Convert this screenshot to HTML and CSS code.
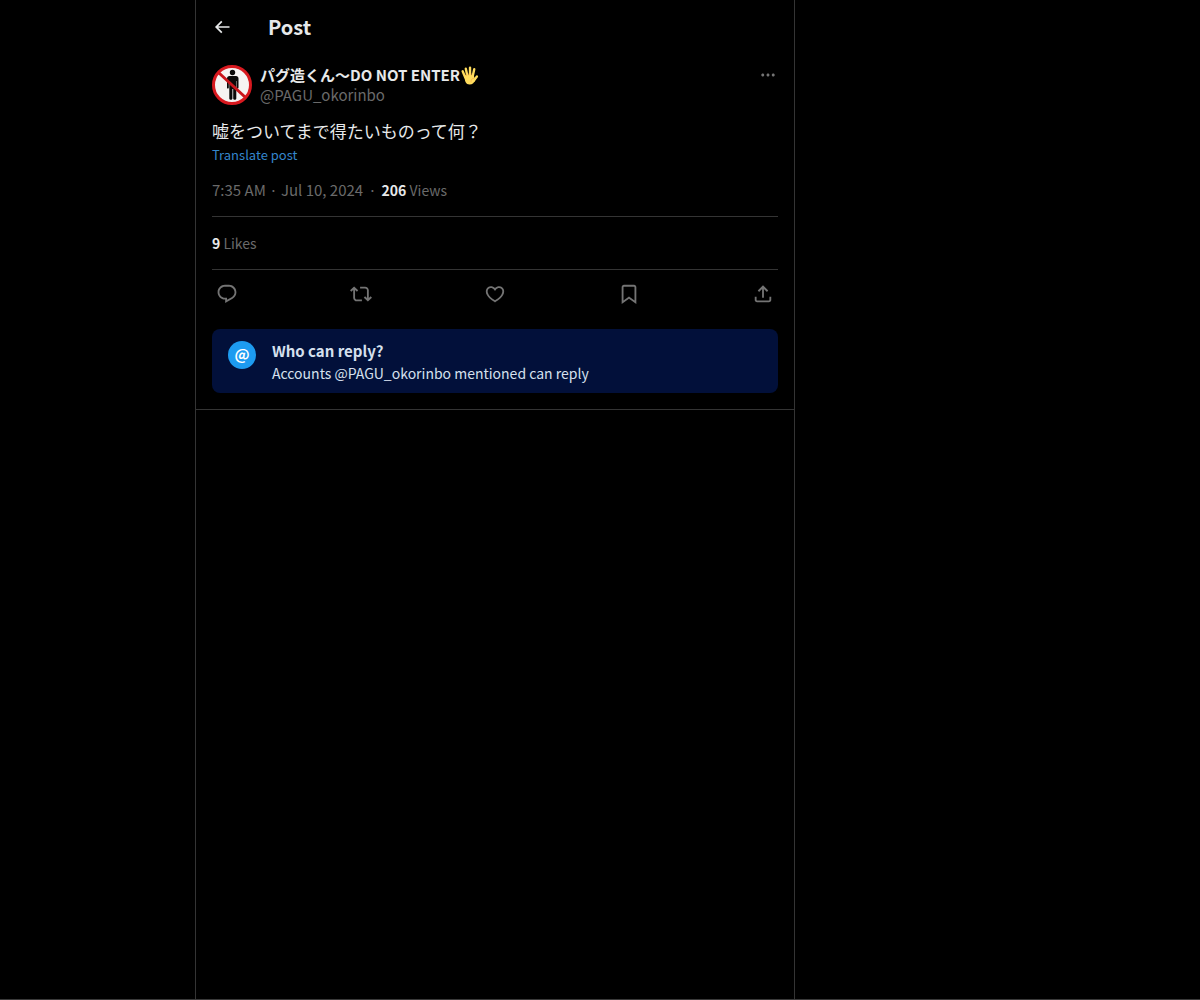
FILE: index.html
```html
<!DOCTYPE html>
<html lang="ja">
<head>
    <meta charset="UTF-8">
    <meta name="viewport" content="width=device-width, initial-scale=1.0">
    <title>Post</title>
    <link rel="stylesheet" href="styles.css">
</head>
<body>
    <main class="timeline">
        <header class="top-bar">
            <button type="button" class="icon-btn back" aria-label="Back">
                <svg viewBox="0 0 24 24"><path d="M7.414 13l5.043 5.04-1.414 1.42L3.586 12l7.457-7.46 1.414 1.42L7.414 11H21v2H7.414z"/></svg>
            </button>
            <h1>Post</h1>
        </header>

        <article class="post">
            <div class="author">
                <a href="#" class="avatar" aria-label="Profile">
                    <svg viewBox="0 0 40 40">
                        <circle cx="20" cy="20" r="19" fill="#f6f3f2"/>
                        <g fill="#0b0908">
                            <circle cx="20.500" cy="7.500" r="2.700"/>
                            <path d="M17.500 11h6.500c1.500 0 2.500 1 2.500 2.500v9c0 1.500-1.800 1.500-1.800 0V16h-.4v17.500c0 1.800-3.100 1.800-3.100 0V24h-.8v9.500c0 1.800-3.100 1.800-3.100 0V16h-.5v6.500c0 1.500-1.800 1.500-1.800 0v-9c0-1.500 1-2.500 2.500-2.500z"/>
                        </g>
                        <path d="M7 8l26 24" stroke="#c9151b" stroke-width="3"/>
                        <circle cx="20" cy="20" r="18.500" fill="none" stroke="#d8191f" stroke-width="3"/>
                    </svg>
                </a>
                <div class="names">
                    <a href="#" class="display-name">パグ造くん〜DO NOT ENTER<svg class="emoji" viewBox="0 0 36 36" role="img" aria-label="hand">
                        <g fill="none" stroke="#ffdc5d" stroke-width="4.500" stroke-linecap="round">
                            <path d="M10 22L5 10M14 19L11 5M19 19V3M24 20l3-14M26 28l6-8"/>
                        </g>
                        <path d="M8 18c4-2 14-2 18 0l3 8c-2 6-5 9-11 9-7 0-9-6-10-17z" fill="#ffdc5d"/>
                        <path d="M12.500 19l-1-4M16.500 18v-4M21.500 18v-4M27 23c-5 1-7 4-6 8" fill="none" stroke="#ef9645" stroke-width="1"/>
                    </svg></a>
                    <a href="#" class="handle">@PAGU_okorinbo</a>
                </div>
                <button type="button" class="icon-btn more" aria-label="More">
                    <svg viewBox="0 0 24 24"><path d="M3 12c0-1.100.9-2 2-2s2 .9 2 2-.9 2-2 2-2-.9-2-2zm9 2c1.100 0 2-.9 2-2s-.9-2-2-2-2 .9-2 2 .9 2 2 2zm7 0c1.100 0 2-.9 2-2s-.9-2-2-2-2 .9-2 2 .9 2 2 2z"/></svg>
                </button>
            </div>

            <p class="post-text">嘘をついてまで得たいものって何？</p>
            <button type="button" class="translate">Translate post</button>

            <div class="meta">
                <a href="#">7:35 AM · Jul 10, 2024</a>
                <span>·</span>
                <span class="views"><strong>206</strong> Views</span>
            </div>

            <div class="stats">
                <a href="#"><strong>9</strong> Likes</a>
            </div>

            <div class="actions">
                <button type="button" class="icon-btn" aria-label="Reply">
                    <svg viewBox="0 0 24 24"><path d="M1.751 10c0-4.42 3.584-8 8.005-8h4.366c4.490 0 8.129 3.640 8.129 8.130 0 2.960-1.607 5.680-4.196 7.110l-8.054 4.460v-3.690h-.067c-4.490.1-8.183-3.510-8.183-8.010zm8.005-6c-3.317 0-6.005 2.690-6.005 6 0 3.370 2.770 6.080 6.138 6.010l.351-.01h1.761v2.300l5.087-2.810c1.951-1.080 3.163-3.130 3.163-5.360 0-3.390-2.744-6.130-6.129-6.130H9.756z"/></svg>
                </button>
                <button type="button" class="icon-btn" aria-label="Repost">
                    <svg viewBox="0 0 24 24"><path d="M4.500 3.880l4.432 4.140-1.364 1.460L5.500 7.550V16c0 1.100.896 2 2 2H13v2H7.500c-2.209 0-4-1.790-4-4V7.550L1.432 9.480.068 8.020 4.500 3.880zM16.500 6H11V4h5.500c2.209 0 4 1.790 4 4v8.450l2.068-1.930 1.364 1.460-4.432 4.140-4.432-4.140 1.364-1.460 2.068 1.930V8c0-1.100-.896-2-2-2z"/></svg>
                </button>
                <button type="button" class="icon-btn" aria-label="Like">
                    <svg viewBox="0 0 24 24"><path d="M16.697 5.500c-1.222-.06-2.679.51-3.890 2.160l-.805 1.090-.806-1.090C9.984 6.010 8.526 5.440 7.304 5.500c-1.243.07-2.349.78-2.910 1.910-.552 1.120-.633 2.780.479 4.820 1.074 1.970 3.257 4.270 7.129 6.610 3.870-2.340 6.052-4.640 7.126-6.610 1.111-2.040 1.030-3.700.477-4.820-.561-1.130-1.666-1.840-2.908-1.910zm4.187 7.690c-1.351 2.480-4.001 5.120-8.379 7.670l-.503.3-.504-.3c-4.379-2.550-7.029-5.190-8.382-7.670-1.360-2.500-1.410-4.860-.514-6.670.887-1.790 2.647-2.910 4.601-3.010 1.651-.09 3.368.56 4.798 2.010 1.429-1.450 3.146-2.100 4.796-2.010 1.954.1 3.714 1.220 4.601 3.010.896 1.810.846 4.170-.514 6.670z"/></svg>
                </button>
                <button type="button" class="icon-btn" aria-label="Bookmark">
                    <svg viewBox="0 0 24 24"><path d="M4 4.500C4 3.120 5.119 2 6.500 2h11C18.881 2 20 3.120 20 4.500v18.440l-8-5.710-8 5.710V4.500zM6.500 4c-.276 0-.5.22-.5.5v14.560l6-4.290 6 4.290V4.500c0-.28-.224-.5-.5-.5h-11z"/></svg>
                </button>
                <button type="button" class="icon-btn" aria-label="Share">
                    <svg viewBox="0 0 24 24"><path d="M12 2.590l5.700 5.700-1.410 1.420L13 6.410V16h-2V6.410l-3.300 3.300-1.410-1.420L12 2.590zM21 15l-.02 3.510c0 1.380-1.120 2.490-2.500 2.490H5.500C4.110 21 3 19.880 3 18.500V15h2v3.500c0 .28.22.5.5.5h12.980c.28 0 .5-.22.5-.5L19 15h2z"/></svg>
                </button>
            </div>

            <div class="reply-info">
                <span class="reply-icon">@</span>
                <div>
                    <h2>Who can reply?</h2>
                    <p>Accounts @PAGU_okorinbo mentioned can reply</p>
                </div>
            </div>
        </article>
    </main>
</body>
</html>
```

FILE: styles.css
```css
* {
    box-sizing: border-box;
}

body {
    margin: 0;
    min-height: 100vh;
    display: grid;
    grid-template-columns: 195fr minmax(0, 600px) 405fr;
    background-color: #000;
    border-bottom: 1px solid #3a3a3a;
    color: #e7e9ea;
    font-family: "Noto Sans CJK JP", sans-serif;
    font-size: 15px;
    line-height: 20px;
}

h1,
h2,
p {
    margin: 0;
}

a {
    color: inherit;
    text-decoration: none;
}

strong {
    color: #e7e9ea;
    font-weight: 700;
}

button {
    padding: 0;
    border: 0;
    background: none;
    font: inherit;
    cursor: pointer;
}

.timeline {
    grid-column: 2;
    border-left: 1px solid #343434;
    border-right: 1px solid #343434;
}

.top-bar {
    display: flex;
    align-items: center;
    height: 53px;
    padding: 0 16px;
}

.top-bar h1 {
    font-size: 20px;
    line-height: 24px;
}

.icon-btn {
    display: flex;
    justify-content: center;
    width: 30px;
    color: #747474;
}

.icon-btn svg {
    width: 22px;
    height: 22px;
    fill: currentColor;
}

.back {
    width: 56px;
    justify-content: flex-start;
    color: #e7e9ea;
}

.back svg {
    width: 20px;
    height: 20px;
}

.post {
    padding: 12px 16px 16px;
    border-bottom: 1px solid #343434;
}

.author {
    display: flex;
    gap: 8px;
    align-items: flex-start;
}

.avatar,
.avatar svg {
    display: block;
    width: 40px;
    height: 40px;
}

.names {
    display: flex;
    flex: 1;
    flex-direction: column;
}

.display-name {
    display: flex;
    align-items: center;
    font-weight: 700;
}

.emoji {
    width: 19px;
    height: 19px;
}

.handle {
    color: #6a6a6a;
}

.more {
    width: 20px;
    height: 20px;
    align-items: center;
}

.more svg {
    width: 18px;
    height: 18px;
}

.post-text {
    margin-top: 12px;
    font-size: 17px;
    line-height: 28px;
}

.translate {
    display: block;
    color: #3486cc;
    font-size: 13px;
}

.meta {
    display: flex;
    gap: 5px;
    margin: 15px 0 16px;
    color: #6a6a6a;
}

.views {
    font-size: 14px;
}

.stats {
    padding: 16px 0;
    border-top: 1px solid #343434;
    border-bottom: 1px solid #343434;
    color: #6a6a6a;
    font-size: 14px;
}

.actions {
    display: flex;
    align-items: center;
    justify-content: space-between;
    height: 47px;
}

.reply-info {
    display: flex;
    gap: 16px;
    margin-top: 12px;
    padding: 12px 16px 8px;
    border-radius: 8px;
    background-color: #02103a;
    color: #d6e0ee;
}

.reply-icon {
    display: flex;
    align-items: center;
    justify-content: center;
    width: 28px;
    height: 28px;
    padding-bottom: 2px;
    border-radius: 50%;
    background-color: #1d9bf0;
    color: #fff;
    font-weight: 700;
}

.reply-info h2 {
    font-size: 15px;
    line-height: 20px;
}

.reply-info p {
    font-size: 14px;
    line-height: 24px;
}
```
